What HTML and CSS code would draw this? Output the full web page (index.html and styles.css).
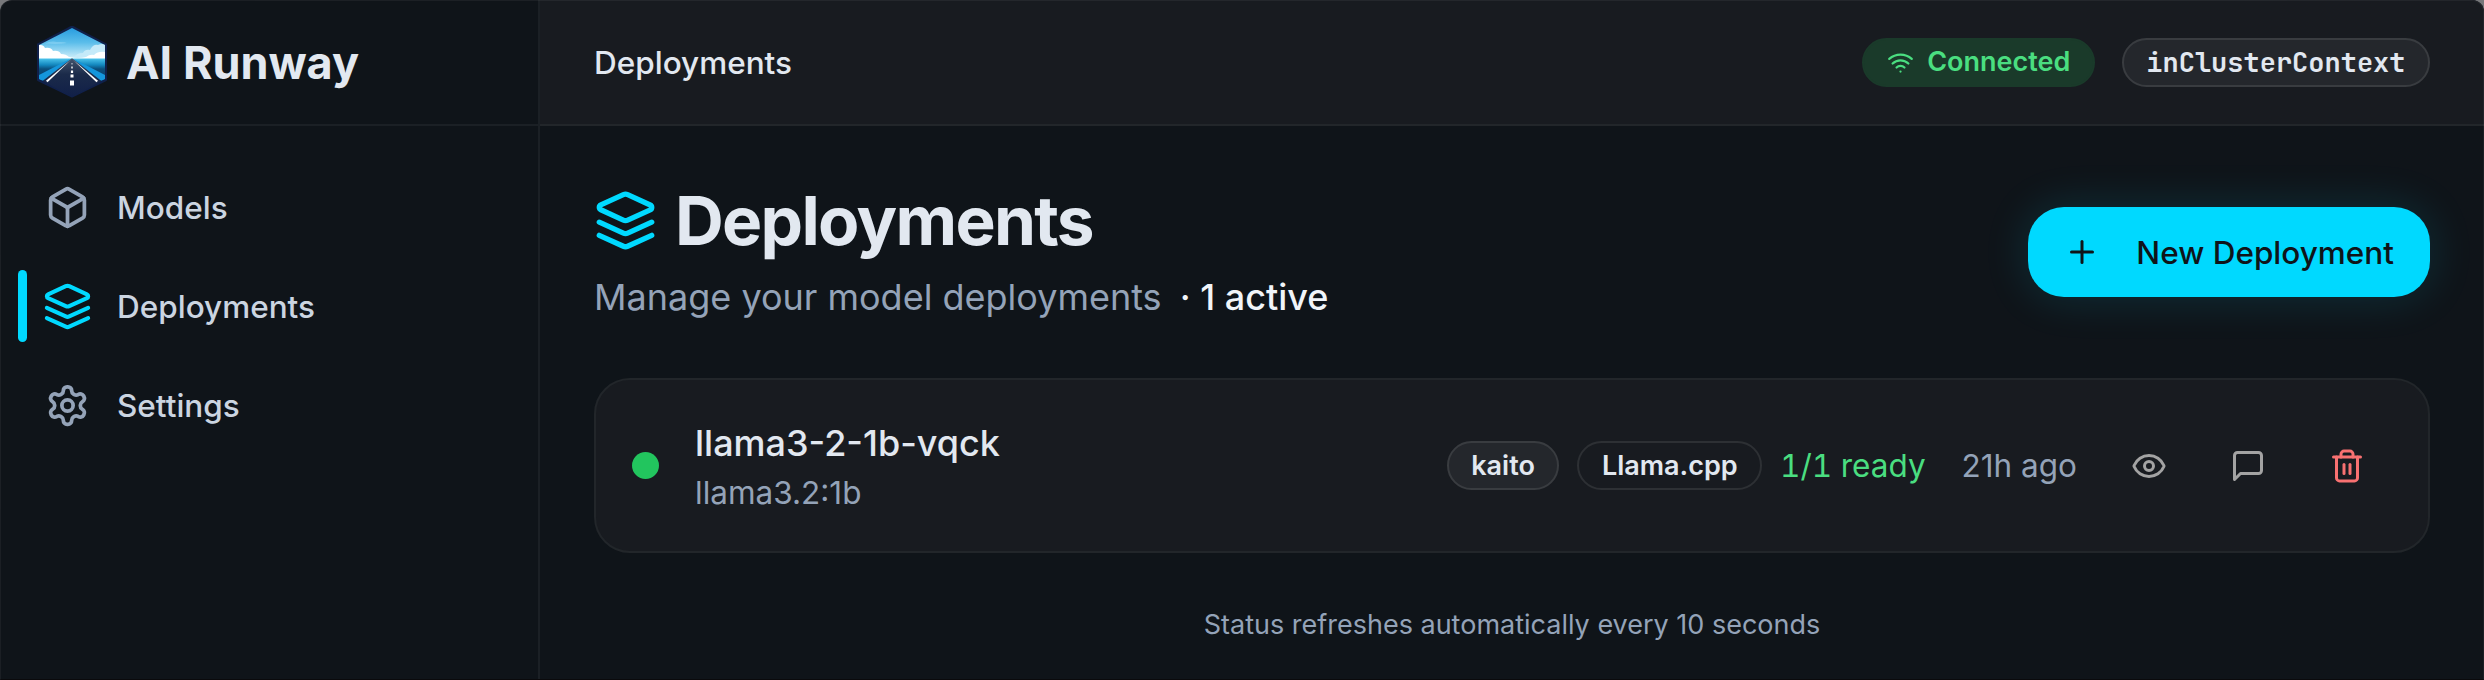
FILE: index.html
```html
<!DOCTYPE html>
<html lang="en">
<head>
    <meta charset="UTF-8">
    <meta name="viewport" content="width=device-width, initial-scale=1.0">
    <title>AI Runway - Deployments</title>
    <link rel="stylesheet" href="styles.css">
</head>
<body>
<div class="app">
    <!-- Sidebar -->
    <aside class="sidebar">
        <div class="brand">
            <svg class="logo" viewBox="0 0 72 72">
                <defs>
                    <linearGradient id="sky" x1="0" y1="0" x2="0" y2="1">
                        <stop offset="0" stop-color="#2097de"/>
                        <stop offset="0.5" stop-color="#5bbdea"/>
                        <stop offset="1" stop-color="#d4f1fb"/>
                    </linearGradient>
                    <linearGradient id="sea" x1="0" y1="0" x2="0" y2="1">
                        <stop offset="0" stop-color="#4cc4ec"/>
                        <stop offset="0.3" stop-color="#1388bf"/>
                        <stop offset="0.5" stop-color="#0b4f7c"/>
                        <stop offset="1" stop-color="#0b3a66"/>
                    </linearGradient>
                    <linearGradient id="road" x1="0" y1="0" x2="0" y2="1">
                        <stop offset="0" stop-color="#44546c"/>
                        <stop offset="0.4" stop-color="#1b2b4a"/>
                        <stop offset="1" stop-color="#101f48"/>
                    </linearGradient>
                    <clipPath id="hex"><path d="M36 2 69 19v34L36 71 3 53V19z"/></clipPath>
                </defs>
                <path d="M36 0.500 70 18.500v35.500L36 70.500 2 54V18.500z" fill="#10204a" stroke="#10204a" stroke-width="2" stroke-linejoin="round"/>
                <g clip-path="url(#hex)">
                    <rect width="72" height="33" fill="url(#sky)"/>
                    <path d="M9 17.500q6-3 12-1.500 8-.5 10 1-8 1.500-22 .5z" fill="#8fd3f3" opacity="0.6"/>
                    <path d="M38 31q3-4 9-4 2-4 7-3 3-6 8-5 4-2 8 0v13H38z" fill="#c5eaf9"/>
                    <path d="M0 19q7-1 9 3 6-1 8 3 6-1 8 3 5 0 8 3 9 2 17 0 4-3 8-2 4-4 11-3v7H0z" fill="#fff"/>
                    <rect y="32.500" width="72" height="21" fill="url(#sea)"/>
                    <path d="M34 33 2 49.500V54l7 1z" fill="#1496dc"/>
                    <path d="M38 33 70 49.500V54l-7 1z" fill="#1496dc"/>
                    <path d="M35.500 32.500h1L68 57v15H4V57z" fill="url(#road)"/>
                    <path d="M34.800 34 10 54.800l1.500 1.400z" fill="#fff"/>
                    <path d="M37.200 34 62 54.800l-1.500 1.400z" fill="#fff"/>
                    <path d="M35.600 37h.8v1.500h-.8zM35.300 40.500h1.400v2h-1.400zM34.900 44.500h2.200v2.500h-2.200zM34.500 48.500h3v3h-3zM34 54.500h4v5h-4z" fill="#fff"/>
                </g>
            </svg>
            <span class="brand-name">AI Runway</span>
        </div>
        <nav class="nav">
            <a class="nav-item">
                <svg class="icon nav-icon" viewBox="0 0 24 24"><path d="M21 8a2 2 0 0 0-1-1.730l-7-4a2 2 0 0 0-2 0l-7 4A2 2 0 0 0 3 8v8a2 2 0 0 0 1 1.730l7 4a2 2 0 0 0 2 0l7-4A2 2 0 0 0 21 16Z"/><path d="m3.300 7 8.700 5 8.700-5"/><path d="M12 22V12"/></svg>
                Models
            </a>
            <a class="nav-item active">
                <svg class="icon nav-icon" viewBox="0 0 24 24"><path d="m12.830 2.180a2 2 0 0 0-1.660 0L2.600 6.080a1 1 0 0 0 0 1.830l8.580 3.910a2 2 0 0 0 1.660 0l8.580-3.900a1 1 0 0 0 0-1.830Z"/><path d="m22 17.650-9.170 4.160a2 2 0 0 1-1.660 0L2 17.650"/><path d="m22 12.650-9.170 4.160a2 2 0 0 1-1.660 0L2 12.650"/></svg>
                Deployments
            </a>
            <a class="nav-item">
                <svg class="icon nav-icon" viewBox="0 0 24 24"><path d="M12.220 2h-.44a2 2 0 0 0-2 2v.18a2 2 0 0 1-1 1.730l-.43.25a2 2 0 0 1-2 0l-.15-.08a2 2 0 0 0-2.730.73l-.22.38a2 2 0 0 0 .73 2.730l.15.1a2 2 0 0 1 1 1.720v.51a2 2 0 0 1-1 1.740l-.15.09a2 2 0 0 0-.73 2.730l.22.38a2 2 0 0 0 2.730.73l.15-.08a2 2 0 0 1 2 0l.43.25a2 2 0 0 1 1 1.730V20a2 2 0 0 0 2 2h.44a2 2 0 0 0 2-2v-.18a2 2 0 0 1 1-1.730l.43-.25a2 2 0 0 1 2 0l.15.08a2 2 0 0 0 2.730-.73l.22-.39a2 2 0 0 0-.73-2.730l-.15-.08a2 2 0 0 1-1-1.740v-.5a2 2 0 0 1 1-1.740l.15-.09a2 2 0 0 0 .73-2.730l-.22-.38a2 2 0 0 0-2.730-.73l-.15.08a2 2 0 0 1-2 0l-.43-.25a2 2 0 0 1-1-1.730V4a2 2 0 0 0-2-2z"/><circle cx="12" cy="12" r="3"/></svg>
                Settings
            </a>
        </nav>
    </aside>

    <div class="content">
        <!-- Top bar -->
        <header class="topbar">
            <span class="topbar-title">Deployments</span>
            <div class="topbar-status">
                <span class="badge badge-connected">
                    <svg class="icon badge-icon" viewBox="0 0 24 24"><path d="M12 20h.01"/><path d="M2 8.820a15 15 0 0 1 20 0"/><path d="M5 12.859a10 10 0 0 1 14 0"/><path d="M8.500 16.429a5 5 0 0 1 7 0"/></svg>
                    Connected
                </span>
                <span class="badge badge-filled badge-mono">inClusterContext</span>
            </div>
        </header>

        <main class="main">
            <div class="page-head">
                <div>
                    <h1 class="page-title">
                        <svg class="icon title-icon" viewBox="0 0 24 24"><path d="m12.830 2.180a2 2 0 0 0-1.660 0L2.600 6.080a1 1 0 0 0 0 1.830l8.580 3.910a2 2 0 0 0 1.660 0l8.580-3.900a1 1 0 0 0 0-1.830Z"/><path d="m22 17.650-9.170 4.160a2 2 0 0 1-1.660 0L2 17.650"/><path d="m22 12.650-9.170 4.160a2 2 0 0 1-1.660 0L2 12.650"/></svg>
                        Deployments
                    </h1>
                    <p class="subtitle">Manage your model deployments <span class="active-count">· 1 active</span></p>
                </div>
                <button class="new-button">
                    <svg class="icon small-icon" viewBox="0 0 24 24"><path d="M5 12h14"/><path d="M12 5v14"/></svg>
                    New Deployment
                </button>
            </div>

            <!-- Deployment row -->
            <div class="card">
                <span class="status-dot"></span>
                <div class="card-info">
                    <div class="card-name">llama3-2-1b-vqck</div>
                    <div class="card-model">llama3.2:1b</div>
                </div>
                <div class="card-meta">
                    <div class="card-badges">
                        <span class="badge badge-filled">kaito</span>
                        <span class="badge badge-outline">Llama.cpp</span>
                        <span class="ready">1/1 ready</span>
                    </div>
                    <span class="age">21h ago</span>
                </div>
                <div class="actions">
                    <button class="action"><svg class="icon small-icon" viewBox="0 0 24 24"><path d="M2.062 12.348a1 1 0 0 1 0-.696 10.750 10.750 0 0 1 19.876 0 1 1 0 0 1 0 .696 10.750 10.750 0 0 1-19.876 0"/><circle cx="12" cy="12" r="3"/></svg></button>
                    <button class="action"><svg class="icon small-icon" viewBox="0 0 24 24"><path d="M21 15a2 2 0 0 1-2 2H7l-4 4V5a2 2 0 0 1 2-2h14a2 2 0 0 1 2 2z"/></svg></button>
                    <button class="action action-delete"><svg class="icon small-icon" viewBox="0 0 24 24"><path d="M3 6h18"/><path d="M19 6v14c0 1-1 2-2 2H7c-1 0-2-1-2-2V6"/><path d="M8 6V4c0-1 1-2 2-2h4c1 0 2 1 2 2v2"/><path d="M10 11v6"/><path d="M14 11v6"/></svg></button>
                </div>
            </div>

            <p class="refresh-note">Status refreshes automatically every 10 seconds</p>
        </main>
    </div>
</div>
</body>
</html>
```

FILE: styles.css
```css
* {
    box-sizing: border-box;
    margin: 0;
    padding: 0;
}

html {
    font-size: 36px;
    background-color: #77787b;
}

body {
    font-family: Inter, sans-serif;
    color: #e2e8f0;
    height: 100vh;
    overflow: hidden;
}

button {
    font: inherit;
    border: none;
    background: none;
    cursor: pointer;
}

.app {
    position: relative;
    display: flex;
    height: 100vh;
    background-color: #0f1419;
    border-radius: 12px 12px 0 0;
    overflow: hidden;
}

/* thin window edge over everything */
.app::after {
    content: "";
    position: absolute;
    inset: 0;
    border: 1px solid rgba(255, 255, 255, 0.05);
    border-bottom-color: #0a0a0c;
    border-radius: 12px 12px 0 0;
    pointer-events: none;
}

.icon {
    flex-shrink: 0;
    fill: none;
    stroke: currentColor;
    stroke-width: 2;
    stroke-linecap: round;
    stroke-linejoin: round;
}

.small-icon {
    width: 1rem;
    height: 1rem;
}

/* Sidebar */
.sidebar {
    width: 15rem;
    flex-shrink: 0;
    border-right: 2px solid #1b2025;
}

.brand {
    display: flex;
    align-items: center;
    gap: 0.5rem;
    height: 3.5rem;
    padding: 0 1rem;
    border-bottom: 2px solid #1b2025;
}

.logo {
    width: 2rem;
    height: 2rem;
}

.brand-name {
    font-size: 1.25rem;
    font-weight: 700;
}

.nav {
    display: flex;
    flex-direction: column;
    gap: 0.25rem;
    padding: 1rem 0.5rem;
}

.nav-item {
    position: relative;
    display: flex;
    align-items: center;
    gap: 0.75rem;
    height: 2.5rem;
    padding: 0 0.75rem;
    font-size: 0.875rem;
    font-weight: 500;
    color: #cbd5e1;
}

.nav-icon {
    width: 1.25rem;
    height: 1.25rem;
    color: #94a3b8;
}

.nav-item.active .nav-icon {
    color: #00d9ff;
    transform: scale(1.1);
}

.nav-item.active::before {
    content: "";
    position: absolute;
    left: 0;
    top: 0.25rem;
    width: 0.25rem;
    height: 2rem;
    border-radius: 1rem;
    background-color: #00d9ff;
}

/* Top bar */
.content {
    flex: 1;
    min-width: 0;
}

.topbar {
    display: flex;
    align-items: center;
    justify-content: space-between;
    height: 3.5rem;
    padding: 0 1.5rem;
    background-color: #181b20;
    border-bottom: 2px solid #22262a;
}

.topbar-title {
    font-size: 0.875rem;
    font-weight: 500;
}

.topbar-status {
    display: flex;
    gap: 0.75rem;
}

.badge {
    display: inline-flex;
    align-items: center;
    height: 49px;
    padding: 0 0.625rem;
    border: 2px solid transparent;
    border-radius: 2rem;
    font-size: 0.75rem;
    font-weight: 600;
    line-height: 1rem;
    white-space: nowrap;
}

.badge-connected {
    background-color: #1a3a2a;
    border-color: #1a3a2a;
    color: #4ade80;
}

.badge-icon {
    width: 0.75rem;
    height: 0.75rem;
    margin-right: 0.375rem;
}

.badge-filled {
    background-color: #24272c;
    border-color: #393c40;
}

.badge-outline {
    border-color: #2d3034;
}

.badge-mono {
    font-family: "JetBrains Mono", "DejaVu Sans Mono", monospace;
}

/* Page */
.main {
    padding: 1.5rem;
}

.page-head {
    display: flex;
    align-items: center;
    justify-content: space-between;
    margin-bottom: 1.5rem;
}

.page-title {
    display: flex;
    align-items: center;
    gap: 0.5rem;
    font-size: 1.875rem;
    line-height: 2.25rem;
    font-weight: 700;
    letter-spacing: -0.025em;
}

.title-icon {
    width: 1.75rem;
    height: 1.75rem;
    color: #00d9ff;
}

.subtitle {
    margin-top: 0.25rem;
    font-size: 1rem;
    line-height: 1.5rem;
    color: #94a3b8;
}

.active-count {
    margin-left: 8px;
    font-weight: 500;
    color: #f1f5f9;
}

.new-button {
    display: flex;
    align-items: center;
    gap: 1rem;
    height: 2.5rem;
    padding: 0 1rem;
    border-radius: 1rem;
    background-color: #00d9ff;
    box-shadow: 0 0 45px rgba(0, 217, 255, 0.15);
    color: #0f1419;
    font-size: 0.875rem;
    font-weight: 500;
}

/* Deployment card */
.card {
    display: flex;
    align-items: center;
    padding: 1rem;
    border: 2px solid #22262a;
    border-radius: 1rem;
    background-color: #181b20;
}

.status-dot {
    width: 0.75rem;
    height: 0.75rem;
    margin-right: 1rem;
    border-radius: 50%;
    background-color: #22c55e;
}

.card-info {
    flex: 1;
}

.card-name {
    font-size: 1rem;
    line-height: 1.5rem;
    font-weight: 500;
}

.card-model {
    font-size: 0.875rem;
    line-height: 1.25rem;
    color: #94a3b8;
}

.card-meta {
    display: flex;
    align-items: center;
    gap: 1rem;
    margin-right: 0.75rem;
    font-size: 0.875rem;
}

.card-badges {
    display: flex;
    align-items: center;
    gap: 0.5rem;
}

.ready {
    color: #4ade80;
    font-variant-numeric: tabular-nums;
}

.age {
    color: #94a3b8;
}

.actions {
    display: flex;
    gap: 0.25rem;
}

.action {
    display: flex;
    align-items: center;
    justify-content: center;
    width: 2.5rem;
    height: 2.5rem;
    color: #a3a3a3;
}

.action-delete {
    color: #f87171;
}

.refresh-note {
    margin-top: 1.5rem;
    font-size: 0.75rem;
    line-height: 1rem;
    text-align: center;
    color: #94a3b8;
}
```
